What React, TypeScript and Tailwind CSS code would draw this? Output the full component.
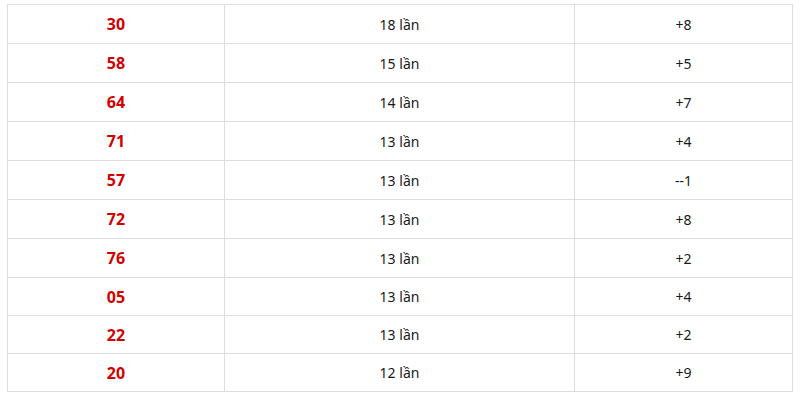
const rows = [
  { num: "30", times: "18 lần", diff: "+8" },
  { num: "58", times: "15 lần", diff: "+5" },
  { num: "64", times: "14 lần", diff: "+7" },
  { num: "71", times: "13 lần", diff: "+4" },
  { num: "57", times: "13 lần", diff: "--1" },
  { num: "72", times: "13 lần", diff: "+8" },
  { num: "76", times: "13 lần", diff: "+2" },
  { num: "05", times: "13 lần", diff: "+4" },
  { num: "22", times: "13 lần", diff: "+2" },
  { num: "20", times: "12 lần", diff: "+9" },
];

export default function App() {
  return (
    <div className="w-[800px] h-[400px] bg-white pt-[4px] pl-[7px] font-['Noto_Sans',sans-serif]">
      <table className="w-[786px] border-collapse border border-[#dddddd]">
        <tbody>
          {rows.map((r, i) => (
            <tr key={r.num} className={i < 7 ? "h-[39px]" : "h-[38px]"}>
              <td className="w-[217px] border border-[#dddddd] text-center text-[16px] font-bold text-[#d30000]">
                {r.num}
              </td>
              <td className="w-[350px] border border-[#dddddd] text-center text-[14px] text-[#1a1a1a]">
                {r.times}
              </td>
              <td className="border border-[#dddddd] text-center text-[14px] text-[#1a1a1a]">
                {r.diff}
              </td>
            </tr>
          ))}
        </tbody>
      </table>
    </div>
  );
}
